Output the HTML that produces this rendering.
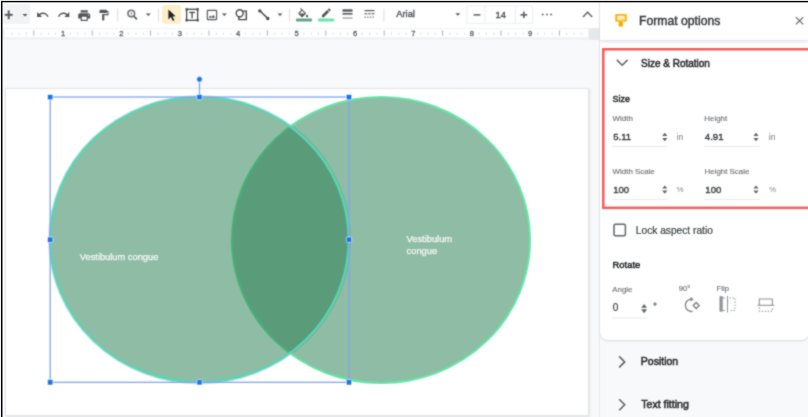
<!DOCTYPE html>
<html><head><meta charset="utf-8">
<style>
html,body{margin:0;padding:0;}
body{width:808px;height:417px;overflow:hidden;position:relative;background:#fff;font-family:"Liberation Sans",sans-serif;}
.a{position:absolute;}
.t{position:absolute;white-space:nowrap;line-height:1;}
svg{position:absolute;overflow:visible;}
.m{color:#26292c;-webkit-text-stroke:0.5px #26292c;}
</style></head><body><svg width="0" height="0" style="position:absolute"><filter id="soft" x="0" y="0" width="100%" height="100%" color-interpolation-filters="sRGB"><feConvolveMatrix order="3" kernelMatrix="1 2 1 2 10 2 1 2 1" edgeMode="duplicate" preserveAlpha="true"/></filter></svg><div id="root" style="position:absolute;left:0;top:0;width:808px;height:417px;overflow:hidden;background:#fff;filter:url(#soft);">

<!-- canvas background -->
<div class="a" style="left:2px;top:39px;width:597px;height:378px;background:#f8f9fa;"></div>
<!-- slide -->
<div class="a" style="left:5px;top:88px;width:584px;height:328px;background:#e3e5e8;box-shadow:1px 1px 2px rgba(60,64,67,0.12);"></div>
<div class="a" style="left:6px;top:89px;width:582px;height:326px;background:#fff;"></div>

<!-- toolbar -->
<div class="a" style="left:2px;top:2px;width:597px;height:26px;background:#fff;"></div>
<div class="a" style="left:2px;top:4px;width:28px;height:20px;background:#f1f3f4;"></div>
<div class="a" style="left:162px;top:4.5px;width:19px;height:19px;background:#fdefc9;border-radius:3px;"></div>

<svg width="808" height="30" style="left:0;top:0;" viewBox="0 0 808 30">
 <g fill="#53575b">
  <!-- add -->
  <rect x="4.7" y="13.9" width="8" height="1.9"/><rect x="7.75" y="10.4" width="1.9" height="8.8"/>
  <path transform="translate(19,9) scale(0.5)" d="M7 10l5 5 5-5z"/>
  <!-- undo -->
  <path transform="translate(36,8) scale(0.56)" d="M12.5 8c-2.65 0-5.05.99-6.9 2.6L2 7v9h9l-3.62-3.62c1.39-1.16 3.16-1.88 5.12-1.88 3.54 0 6.55 2.31 7.6 5.5l2.37-.78C21.08 11.03 17.15 8 12.5 8z"/>
  <!-- redo -->
  <path transform="translate(57,8) scale(0.56)" d="M18.4 10.6C16.55 8.99 14.15 8 11.5 8c-4.65 0-8.58 3.03-9.96 7.22L3.9 16c1.05-3.19 4.05-5.5 7.6-5.5 1.95 0 3.73.72 5.12 1.88L13 16h9V7l-3.6 3.6z"/>
  <!-- print -->
  <path transform="translate(77,8.4) scale(0.6)" d="M19 8H5c-1.66 0-3 1.34-3 3v6h4v4h12v-4h4v-6c0-1.66-1.34-3-3-3zm-3 11H8v-5h8v5zm3-7c-.55 0-1-.45-1-1s.45-1 1-1 1 .45 1 1-.45 1-1 1zm-1-9H6v4h12V3z"/>
  <!-- paint format -->
  <path transform="translate(97.4,8.8) scale(0.53)" d="M18 4V3c0-.55-.45-1-1-1H5c-.55 0-1 .45-1 1v4c0 .55.45 1 1 1h12c.55 0 1-.45 1-1V6h1v4H9v11c0 .55.45 1 1 1h2c.55 0 1-.45 1-1v-9h8V4h-3z"/>
  <!-- zoom -->
  <circle cx="131.3" cy="13.6" r="3.3" fill="none" stroke="#6b6f73" stroke-width="1.6"/><path d="M133.8 16.1 L136.9 19.3" stroke="#5f6368" stroke-width="1.9"/><rect x="130.8" y="11.9" width="1" height="3.4" fill="#80868b"/>
  <path transform="translate(142.3,8.5) scale(0.5)" d="M7 10l5 5 5-5z"/>
  <!-- cursor -->
  <path d="M168.4 9.4 L175.6 16.2 L172.5 16.5 L174.5 20.3 L172.9 21 L170.9 17.1 L168.4 19.6 Z" fill="#202124"/>
  <!-- image -->
  <path transform="translate(205,8) scale(0.58)" d="M19 5v14H5V5h14m0-2H5c-1.1 0-2 .9-2 2v14c0 1.1.9 2 2 2h14c1.1 0 2-.9 2-2V5c0-1.1-.9-2-2-2zm-4.86 8.86l-3 3.87L9 13.14 6 17h12l-3.86-5.14z"/>
  <path transform="translate(218.4,8.5) scale(0.5)" d="M7 10l5 5 5-5z"/>
  <path transform="translate(274,8.5) scale(0.5)" d="M7 10l5 5 5-5z"/>
  <!-- fill bucket -->
  <path transform="translate(296.6,7.9) scale(0.55)" d="M16.56 8.94L7.62 0 6.21 1.41l2.38 2.38-5.15 5.15c-.59.59-.59 1.54 0 2.12l5.5 5.5c.29.29.68.44 1.06.44s.77-.15 1.06-.44l5.5-5.5c.59-.58.59-1.53 0-2.12zM5.21 10L10 5.21 14.79 10H5.21zM19 11.5s-2 2.17-2 3.5c0 1.1.9 2 2 2s2-.9 2-2c0-1.33-2-3.5-2-3.5z"/>
  <!-- pen -->
  <path transform="translate(319.8,8.4) scale(0.52)" d="M17.75 7L14 3.25l-10 10V17h3.75l10-10zm2.96-2.96c.39-.39.39-1.02 0-1.41L18.37.29c-.39-.39-1.02-.39-1.41 0L15 2.25 18.75 6l1.96-1.96z"/>
  <!-- line weight -->
  <rect x="342.5" y="9.3" width="10" height="2.4"/>
  <rect x="342.5" y="13" width="10" height="1.6"/>
  <rect x="342.5" y="17.5" width="10" height="1.1" opacity="0.7"/>
  <!-- line dash -->
  <rect x="364.5" y="10" width="10" height="1.2"/>
  <rect x="364.5" y="13.2" width="2.8" height="1.1"/><rect x="368.2" y="13.2" width="2.5" height="1.1"/><rect x="371.6" y="13.2" width="2.9" height="1.1"/>
  <rect x="364.5" y="16.6" width="1.3" height="1.1"/><rect x="367.2" y="16.6" width="1.3" height="1.1"/><rect x="369.9" y="16.6" width="1.3" height="1.1"/><rect x="372.6" y="16.6" width="1.3" height="1.1"/>
  <!-- font dropdown -->
  <path transform="translate(451.8,8.3) scale(0.5)" d="M7 10l5 5 5-5z"/>
  <!-- minus plus -->
  <rect x="473.6" y="14" width="6.8" height="1.7" fill="#6b6f73"/>
  <rect x="520.5" y="14" width="6.7" height="1.7" fill="#5f6368"/><rect x="523" y="11.6" width="1.7" height="6.5" fill="#5f6368"/>
  <!-- more -->
  <g fill="#6b6f73"><circle cx="542.7" cy="14.5" r="1"/><circle cx="546.9" cy="14.5" r="1"/><circle cx="551.1" cy="14.5" r="1"/></g>
  <!-- expand less -->
  <path d="M583 17 L587.6 12.1 L592.2 17" fill="none" stroke="#6b6f73" stroke-width="1.6"/>
 </g>
 <!-- text box -->
 <g fill="none" stroke="#444746" stroke-width="1.3">
  <rect x="186.6" y="9.3" width="11" height="11"/>
 </g>
 <g fill="#444746">
  <rect x="185.5" y="8.2" width="2.2" height="2.2"/><rect x="196.5" y="8.2" width="2.2" height="2.2"/>
  <rect x="185.5" y="19.2" width="2.2" height="2.2"/><rect x="196.5" y="19.2" width="2.2" height="2.2"/>
  <rect x="189.2" y="11.8" width="5.8" height="1.3"/><rect x="191.45" y="11.8" width="1.3" height="6.4"/>
 </g>
 <!-- shapes -->
 <g fill="none" stroke="#444746" stroke-width="1.4">
  <circle cx="239.7" cy="13.3" r="3.5"/>
  <path d="M242.6 11.1 H246.3 V19.6 H238.9 V16.9"/>
 </g>
 <!-- line -->
 <g stroke="#444746" stroke-width="1.5" fill="#444746">
  <line x1="259.8" y1="10.8" x2="267.8" y2="18.5"/>
  <circle cx="259.8" cy="10.8" r="0.9"/><circle cx="267.8" cy="18.5" r="0.9"/>
 </g>
 <!-- colour bars -->
 <rect x="296" y="18.4" width="16" height="3" rx="0.6" fill="#62a385"/>
 <rect x="318" y="18.4" width="16.2" height="3" rx="0.6" fill="#62e8a8"/>
 <!-- separators -->
 <g fill="#dadce0">
  <rect x="117.2" y="8.5" width="1" height="13"/>
  <rect x="158" y="8.5" width="1" height="13"/>
  <rect x="289" y="8.5" width="1" height="13"/>
  <rect x="383.4" y="8.5" width="1" height="13"/>
 </g>
 <!-- font size box -->
 <rect x="466.9" y="5.9" width="65.6" height="17.4" fill="none" stroke="#eceef0" stroke-width="1"/>
 <rect x="484.5" y="5.5" width="1" height="18.3" fill="#eceef0"/>
 <rect x="515" y="5.5" width="1" height="18.3" fill="#eceef0"/>
</svg>
<div class="t" style="left:396.3px;top:9.6px;font-size:9.3px;color:#50545a;-webkit-text-stroke:0.4px #50545a;">Arial</div>
<div class="t" style="left:495.5px;top:9.85px;font-size:9.4px;color:#505458;-webkit-text-stroke:0.4px #505458;">14</div>

<!-- ruler -->
<div class="a" style="left:2px;top:27.5px;width:597px;height:12px;background:#f1f3f4;"></div><div class="a" style="left:589px;top:28px;width:10px;height:11.5px;background:#e6e8eb;"></div>
<div class="a" style="left:5px;top:29.4px;width:583px;height:7.4px;background:#fff;"></div>
<svg width="808" height="45" style="left:0;top:0;" viewBox="0 0 808 45">
 <g font-family="Liberation Sans" font-size="7.6" fill="#5f6368" stroke="#5f6368" stroke-width="0.3">
<line x1="11.9" y1="32.5" x2="11.9" y2="35" stroke="#d4d7da" stroke-width="0.8"/>
<line x1="19.2" y1="32.5" x2="19.2" y2="35" stroke="#d4d7da" stroke-width="0.8"/>
<line x1="26.5" y1="32.5" x2="26.5" y2="35" stroke="#d4d7da" stroke-width="0.8"/>
<line x1="33.8" y1="30.3" x2="33.8" y2="35.7" stroke="#b0b4b8" stroke-width="1"/>
<line x1="41.1" y1="32.5" x2="41.1" y2="35" stroke="#d4d7da" stroke-width="0.8"/>
<line x1="48.4" y1="32.5" x2="48.4" y2="35" stroke="#d4d7da" stroke-width="0.8"/>
<line x1="55.7" y1="32.5" x2="55.7" y2="35" stroke="#d4d7da" stroke-width="0.8"/>
<text x="63.0" y="36.1" text-anchor="middle">1</text>
<line x1="70.3" y1="32.5" x2="70.3" y2="35" stroke="#d4d7da" stroke-width="0.8"/>
<line x1="77.6" y1="32.5" x2="77.6" y2="35" stroke="#d4d7da" stroke-width="0.8"/>
<line x1="84.9" y1="32.5" x2="84.9" y2="35" stroke="#d4d7da" stroke-width="0.8"/>
<line x1="92.2" y1="30.3" x2="92.2" y2="35.7" stroke="#b0b4b8" stroke-width="1"/>
<line x1="99.5" y1="32.5" x2="99.5" y2="35" stroke="#d4d7da" stroke-width="0.8"/>
<line x1="106.8" y1="32.5" x2="106.8" y2="35" stroke="#d4d7da" stroke-width="0.8"/>
<line x1="114.1" y1="32.5" x2="114.1" y2="35" stroke="#d4d7da" stroke-width="0.8"/>
<text x="121.4" y="36.1" text-anchor="middle">2</text>
<line x1="128.7" y1="32.5" x2="128.7" y2="35" stroke="#d4d7da" stroke-width="0.8"/>
<line x1="136.0" y1="32.5" x2="136.0" y2="35" stroke="#d4d7da" stroke-width="0.8"/>
<line x1="143.3" y1="32.5" x2="143.3" y2="35" stroke="#d4d7da" stroke-width="0.8"/>
<line x1="150.6" y1="30.3" x2="150.6" y2="35.7" stroke="#b0b4b8" stroke-width="1"/>
<line x1="157.9" y1="32.5" x2="157.9" y2="35" stroke="#d4d7da" stroke-width="0.8"/>
<line x1="165.2" y1="32.5" x2="165.2" y2="35" stroke="#d4d7da" stroke-width="0.8"/>
<line x1="172.5" y1="32.5" x2="172.5" y2="35" stroke="#d4d7da" stroke-width="0.8"/>
<text x="179.8" y="36.1" text-anchor="middle">3</text>
<line x1="187.1" y1="32.5" x2="187.1" y2="35" stroke="#d4d7da" stroke-width="0.8"/>
<line x1="194.4" y1="32.5" x2="194.4" y2="35" stroke="#d4d7da" stroke-width="0.8"/>
<line x1="201.7" y1="32.5" x2="201.7" y2="35" stroke="#d4d7da" stroke-width="0.8"/>
<line x1="209.0" y1="30.3" x2="209.0" y2="35.7" stroke="#b0b4b8" stroke-width="1"/>
<line x1="216.3" y1="32.5" x2="216.3" y2="35" stroke="#d4d7da" stroke-width="0.8"/>
<line x1="223.6" y1="32.5" x2="223.6" y2="35" stroke="#d4d7da" stroke-width="0.8"/>
<line x1="230.9" y1="32.5" x2="230.9" y2="35" stroke="#d4d7da" stroke-width="0.8"/>
<text x="238.2" y="36.1" text-anchor="middle">4</text>
<line x1="245.5" y1="32.5" x2="245.5" y2="35" stroke="#d4d7da" stroke-width="0.8"/>
<line x1="252.8" y1="32.5" x2="252.8" y2="35" stroke="#d4d7da" stroke-width="0.8"/>
<line x1="260.1" y1="32.5" x2="260.1" y2="35" stroke="#d4d7da" stroke-width="0.8"/>
<line x1="267.4" y1="30.3" x2="267.4" y2="35.7" stroke="#b0b4b8" stroke-width="1"/>
<line x1="274.7" y1="32.5" x2="274.7" y2="35" stroke="#d4d7da" stroke-width="0.8"/>
<line x1="282.0" y1="32.5" x2="282.0" y2="35" stroke="#d4d7da" stroke-width="0.8"/>
<line x1="289.3" y1="32.5" x2="289.3" y2="35" stroke="#d4d7da" stroke-width="0.8"/>
<text x="296.6" y="36.1" text-anchor="middle">5</text>
<line x1="303.9" y1="32.5" x2="303.9" y2="35" stroke="#d4d7da" stroke-width="0.8"/>
<line x1="311.2" y1="32.5" x2="311.2" y2="35" stroke="#d4d7da" stroke-width="0.8"/>
<line x1="318.5" y1="32.5" x2="318.5" y2="35" stroke="#d4d7da" stroke-width="0.8"/>
<line x1="325.8" y1="30.3" x2="325.8" y2="35.7" stroke="#b0b4b8" stroke-width="1"/>
<line x1="333.1" y1="32.5" x2="333.1" y2="35" stroke="#d4d7da" stroke-width="0.8"/>
<line x1="340.4" y1="32.5" x2="340.4" y2="35" stroke="#d4d7da" stroke-width="0.8"/>
<line x1="347.7" y1="32.5" x2="347.7" y2="35" stroke="#d4d7da" stroke-width="0.8"/>
<text x="355.0" y="36.1" text-anchor="middle">6</text>
<line x1="362.3" y1="32.5" x2="362.3" y2="35" stroke="#d4d7da" stroke-width="0.8"/>
<line x1="369.6" y1="32.5" x2="369.6" y2="35" stroke="#d4d7da" stroke-width="0.8"/>
<line x1="376.9" y1="32.5" x2="376.9" y2="35" stroke="#d4d7da" stroke-width="0.8"/>
<line x1="384.2" y1="30.3" x2="384.2" y2="35.7" stroke="#b0b4b8" stroke-width="1"/>
<line x1="391.5" y1="32.5" x2="391.5" y2="35" stroke="#d4d7da" stroke-width="0.8"/>
<line x1="398.8" y1="32.5" x2="398.8" y2="35" stroke="#d4d7da" stroke-width="0.8"/>
<line x1="406.1" y1="32.5" x2="406.1" y2="35" stroke="#d4d7da" stroke-width="0.8"/>
<text x="413.4" y="36.1" text-anchor="middle">7</text>
<line x1="420.7" y1="32.5" x2="420.7" y2="35" stroke="#d4d7da" stroke-width="0.8"/>
<line x1="428.0" y1="32.5" x2="428.0" y2="35" stroke="#d4d7da" stroke-width="0.8"/>
<line x1="435.3" y1="32.5" x2="435.3" y2="35" stroke="#d4d7da" stroke-width="0.8"/>
<line x1="442.6" y1="30.3" x2="442.6" y2="35.7" stroke="#b0b4b8" stroke-width="1"/>
<line x1="449.9" y1="32.5" x2="449.9" y2="35" stroke="#d4d7da" stroke-width="0.8"/>
<line x1="457.2" y1="32.5" x2="457.2" y2="35" stroke="#d4d7da" stroke-width="0.8"/>
<line x1="464.5" y1="32.5" x2="464.5" y2="35" stroke="#d4d7da" stroke-width="0.8"/>
<text x="471.8" y="36.1" text-anchor="middle">8</text>
<line x1="479.1" y1="32.5" x2="479.1" y2="35" stroke="#d4d7da" stroke-width="0.8"/>
<line x1="486.4" y1="32.5" x2="486.4" y2="35" stroke="#d4d7da" stroke-width="0.8"/>
<line x1="493.7" y1="32.5" x2="493.7" y2="35" stroke="#d4d7da" stroke-width="0.8"/>
<line x1="501.0" y1="30.3" x2="501.0" y2="35.7" stroke="#b0b4b8" stroke-width="1"/>
<line x1="508.3" y1="32.5" x2="508.3" y2="35" stroke="#d4d7da" stroke-width="0.8"/>
<line x1="515.6" y1="32.5" x2="515.6" y2="35" stroke="#d4d7da" stroke-width="0.8"/>
<line x1="522.9" y1="32.5" x2="522.9" y2="35" stroke="#d4d7da" stroke-width="0.8"/>
<text x="530.2" y="36.1" text-anchor="middle">9</text>
<line x1="537.5" y1="32.5" x2="537.5" y2="35" stroke="#d4d7da" stroke-width="0.8"/>
<line x1="544.8" y1="32.5" x2="544.8" y2="35" stroke="#d4d7da" stroke-width="0.8"/>
<line x1="552.1" y1="32.5" x2="552.1" y2="35" stroke="#d4d7da" stroke-width="0.8"/>
<line x1="559.4" y1="30.3" x2="559.4" y2="35.7" stroke="#b0b4b8" stroke-width="1"/>
<line x1="566.7" y1="32.5" x2="566.7" y2="35" stroke="#d4d7da" stroke-width="0.8"/>
<line x1="574.0" y1="32.5" x2="574.0" y2="35" stroke="#d4d7da" stroke-width="0.8"/>
<line x1="581.3" y1="32.5" x2="581.3" y2="35" stroke="#d4d7da" stroke-width="0.8"/>
 </g>
</svg>

<!-- venn -->
<svg width="808" height="417" style="left:0;top:0;" viewBox="0 0 808 417">
 <ellipse cx="199.5" cy="239.7" rx="150.8" ry="144" fill="none" stroke="#b4c4f4" stroke-width="1.4" opacity="0.6"/>
 <ellipse cx="381" cy="240" rx="149" ry="143" fill="#2c8153" fill-opacity="0.53" stroke="#62e6a6" stroke-width="2"/>
 <ellipse cx="199.5" cy="239.7" rx="149.3" ry="142.5" fill="#2c8153" fill-opacity="0.53" stroke="#55d8ae" stroke-width="2.3" stroke-opacity="1"/>
 <!-- selection -->
 <rect x="50.2" y="97" width="298.8" height="285.3" fill="none" stroke="#7fa6f0" stroke-width="1.3"/>
 <line x1="199.5" y1="79.5" x2="199.5" y2="97" stroke="#7fa6f0" stroke-width="1.3"/>
 <g fill="#1a73e8" stroke="#fff" stroke-width="0.6">
  <rect x="47.5" y="94.4" width="5.4" height="5.4" rx="1"/>
  <rect x="196.8" y="94.4" width="5.4" height="5.4" rx="1"/>
  <rect x="346.3" y="94.4" width="5.4" height="5.4" rx="1"/>
  <rect x="47.5" y="237" width="5.4" height="5.4" rx="1"/>
  <rect x="346.3" y="237" width="5.4" height="5.4" rx="1"/>
  <rect x="47.5" y="379.6" width="5.4" height="5.4" rx="1"/>
  <rect x="196.8" y="379.6" width="5.4" height="5.4" rx="1"/>
  <rect x="346.3" y="379.6" width="5.4" height="5.4" rx="1"/>
  <circle cx="199.5" cy="79.3" r="2.8"/>
 </g>
</svg>
<div class="t" style="left:79.8px;top:252.6px;font-size:9.3px;color:#f4f8f6;-webkit-text-stroke:0.25px #f4f8f6;">Vestibulum congue</div>
<div class="t" style="left:406.6px;top:234.9px;font-size:9.3px;color:#f4f8f6;-webkit-text-stroke:0.25px #f4f8f6;">Vestibulum</div>
<div class="t" style="left:406.6px;top:247px;font-size:9.3px;color:#f4f8f6;-webkit-text-stroke:0.25px #f4f8f6;">congue</div>

<!-- right panel -->
<div class="a" style="left:599px;top:2px;width:209px;height:415px;background:#f8f9fa;border-left:1px solid #e8eaed;box-sizing:border-box;"></div>
<div class="a" style="left:600px;top:2px;width:208px;height:38px;background:#fff;box-shadow:0 1px 2px rgba(60,64,67,0.15);"></div>
<!-- card -->
<div class="a" style="left:600px;top:44px;width:208.5px;height:295.5px;background:#fff;border-radius:0 0 8px 8px;box-shadow:0 1px 2px rgba(60,64,67,0.18);"></div>
<!-- red annotation -->
<svg width="808" height="417" style="left:0;top:0;" viewBox="0 0 808 417"><rect x="603.3" y="49.25" width="230" height="158.6" fill="none" stroke="#f45b57" stroke-width="2.5"/></svg>

<svg width="808" height="417" style="left:0;top:0;" viewBox="0 0 808 417">
 <!-- format icon -->
 <rect x="615.2" y="13.9" width="11.6" height="7.8" rx="1.2" fill="#fbb214"/>
 <rect x="617.3" y="15.7" width="7.4" height="4.5" fill="#feefc8"/>
 <path d="M618.6 17.6 L620 16.8 L621.2 17.6 Z M621 19.4 L622.6 18.2 L624 19.4 Z" fill="#fbc44a"/>
 <path d="M618.7 21.5 H622.9 V25.4 L621.9 26.8 H619.7 L618.7 25.4 Z" fill="#f9ab00"/>
 <!-- close -->
 <path transform="translate(792.6,13.8) scale(0.58)" d="M19 6.41L17.59 5 12 10.59 6.41 5 5 6.41 10.59 12 5 17.59 6.41 19 12 13.41 17.59 19 19 17.59 13.41 12z" fill="#5f6368"/>
 <!-- chevrons -->
 <path d="M616.8 59.9 L622.2 65.3 L627.6 59.9" fill="none" stroke="#5f6368" stroke-width="1.5"/>
 <path d="M619.2 356.4 L624.7 361.9 L619.2 367.4" fill="none" stroke="#5a5e62" stroke-width="1.5"/>
 <path d="M619.2 399.2 L624.7 404.7 L619.2 410.2" fill="none" stroke="#5a5e62" stroke-width="1.5"/>
 <!-- spinners -->
 <g fill="#5f6368">
  <path d="M662.2 136 L664.8 132.8 L667.4 136 Z M662.2 138 L664.8 141.2 L667.4 138 Z"/>
  <path d="M753.4 136 L756 132.8 L758.6 136 Z M753.4 138 L756 141.2 L758.6 138 Z"/>
  <path d="M662.2 188.6 L664.8 185.4 L667.4 188.6 Z M662.2 190.6 L664.8 193.8 L667.4 190.6 Z"/>
  <path d="M753.4 188.6 L756 185.4 L758.6 188.6 Z M753.4 190.6 L756 193.8 L758.6 190.6 Z"/>
  <path d="M641.2 307.8 L644.1 303.9 L647 307.8 Z M641.2 309.3 L644.1 313.2 L647 309.3 Z"/>
 </g>
 <!-- underlines -->
 <g fill="#e8eaed">
  <rect x="612" y="146" width="55.5" height="1"/>
  <rect x="704.3" y="146" width="55.3" height="1"/>
  <rect x="612" y="199" width="55.5" height="1"/>
  <rect x="704.3" y="199" width="55.3" height="1"/>
  <rect x="612" y="317.5" width="35.7" height="1"/>
 </g>
 <!-- checkbox -->
 <rect x="614" y="224.3" width="11.4" height="11.4" rx="1.5" fill="none" stroke="#5f6368" stroke-width="1.5"/>
 <!-- rotate 90 icon -->
 <g fill="none" stroke="#7a7e83" stroke-width="1.1">
  <path d="M691.2 299.1 A6.2 6.2 0 1 0 692.6 311.4" stroke-width="1.3"/>
  <path d="M693.2 305.5 L696.2 302.5 L699.2 305.5 L696.2 308.5 Z" stroke-width="1.3"/>
 </g>
 <!-- flip h -->
 <g fill="#8d9296">
  <rect x="719.5" y="296.2" width="3.2" height="15.5"/>
  <rect x="727" y="296" width="1" height="16.5"/>
 </g>
 <g fill="none" stroke="#8d9296" stroke-width="0.9">
  <path d="M722.5 298 H725 M722.5 310.5 H725"/>
  <path d="M729.5 298 H735 V310.5 H729.5" stroke-dasharray="1.5 1.5"/>
 </g>
 <!-- flip v -->
 <g fill="none" stroke="#8d9296" stroke-width="1.1">
  <path d="M759.3 305 V299 H772.3 V305"/>
  <path d="M757.5 305.3 H774.3"/>
  <path d="M759.3 307.5 V311.2 H772.3 V307.5" stroke-dasharray="1.5 1.5"/>
 </g>
</svg>

<div class="t" style="left:639px;top:14.5px;font-size:12.2px;color:#303336;-webkit-text-stroke:0.4px #303336;">Format options</div>
<div class="t m" style="left:641px;top:58.5px;font-size:10px;">Size &amp; Rotation</div>
<div class="t m" style="left:612.6px;top:95.3px;font-size:8.9px;">Size</div>
<div class="t" style="left:612.6px;top:115.2px;font-size:7.9px;color:#6f7377;-webkit-text-stroke:0.15px #6f7377;">Width</div>
<div class="t" style="left:704.3px;top:115.2px;font-size:7.9px;color:#6f7377;-webkit-text-stroke:0.15px #6f7377;">Height</div>
<div class="t" style="left:613.2px;top:131.7px;font-size:9.6px;color:#3c4043;-webkit-text-stroke:0.4px #3c4043;">5.11</div>
<div class="t" style="left:704.8px;top:131.7px;font-size:9.6px;color:#3c4043;-webkit-text-stroke:0.4px #3c4043;">4.91</div>
<div class="t" style="left:676.6px;top:132.9px;font-size:8.4px;color:#80868b;-webkit-text-stroke:0.1px #80868b;">in</div>
<div class="t" style="left:768.8px;top:132.9px;font-size:8.4px;color:#80868b;-webkit-text-stroke:0.1px #80868b;">in</div>
<div class="t" style="left:612.6px;top:168.4px;font-size:7.9px;color:#6f7377;-webkit-text-stroke:0.15px #6f7377;">Width Scale</div>
<div class="t" style="left:704.6px;top:168.4px;font-size:7.9px;color:#6f7377;-webkit-text-stroke:0.15px #6f7377;">Height Scale</div>
<div class="t" style="left:613.2px;top:185.1px;font-size:9.6px;color:#3c4043;-webkit-text-stroke:0.4px #3c4043;">100</div>
<div class="t" style="left:705.3px;top:185.1px;font-size:9.6px;color:#3c4043;-webkit-text-stroke:0.4px #3c4043;">100</div>
<div class="t" style="left:676.6px;top:186.4px;font-size:8px;color:#80868b;">%</div>
<div class="t" style="left:769px;top:186.4px;font-size:8px;color:#80868b;">%</div>
<div class="t" style="left:635.8px;top:226px;font-size:10.2px;color:#3c4043;-webkit-text-stroke:0.2px #3c4043;">Lock aspect ratio</div>
<div class="t m" style="left:612.6px;top:259.6px;font-size:9.4px;">Rotate</div>
<div class="t" style="left:612.3px;top:286.2px;font-size:7.9px;color:#6f7377;-webkit-text-stroke:0.15px #6f7377;">Angle</div>
<div class="t" style="left:678.8px;top:285.2px;font-size:7.7px;color:#6f7377;-webkit-text-stroke:0.15px #6f7377;">90°</div>
<div class="t" style="left:716.6px;top:285.2px;font-size:7.7px;color:#6f7377;-webkit-text-stroke:0.15px #6f7377;">Flip</div>
<div class="t" style="left:612.8px;top:302.9px;font-size:10px;color:#3c4043;-webkit-text-stroke:0.2px #3c4043;">0</div>
<svg width="808" height="417" style="left:0;top:0;" viewBox="0 0 808 417"><circle cx="655" cy="304.1" r="1.3" fill="#80868b" stroke="#80868b" stroke-width="0.8"/><path d="M690.4 296.9 L693.6 299.2 L690.6 301.6 Z" fill="#7a7e83"/></svg>
<div class="t m" style="left:640.8px;top:356px;font-size:10.5px;">Position</div>
<div class="t m" style="left:641.2px;top:398.6px;font-size:10.6px;">Text fitting</div>

<!-- black frame -->
</div>
<svg width="808" height="417" style="position:absolute;left:0;top:0;" viewBox="0 0 808 417"><rect x="1" y="0.9" width="807" height="1.4" fill="#000"/><rect x="0.95" y="0.9" width="1.5" height="417" fill="#000"/></svg>
</body></html>
